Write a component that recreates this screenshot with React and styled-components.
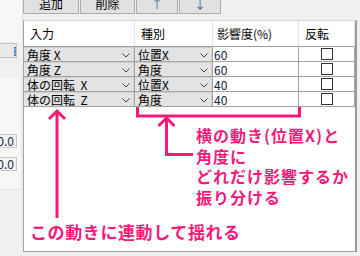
import React from "react";
import styled, { createGlobalStyle } from "styled-components";

const PINK = "#f51a7a";

const GlobalStyle = createGlobalStyle`
  html, body {
    margin: 0;
    padding: 0;
    background: #f0f0f0;
    overflow: hidden;
  }
  body {
    font-family: "Noto Sans CJK JP", "Noto Sans", sans-serif;
  }
`;

const rows = [
  { input: "角度 X", kind: "位置X", value: "60" },
  { input: "角度 Z", kind: "角度", value: "60" },
  { input: "体の回転  X", kind: "位置X", value: "40" },
  { input: "体の回転  Z", kind: "角度", value: "40" },
];

export default function App() {
  return (
    <>
      <GlobalStyle />
      <Page>
        <LeftStrip>
          <TopPane />
          <SmallButton>
            <span>E</span>
          </SmallButton>
          <FieldPane>
            <NumField>10.0</NumField>
            <NumField>10.0</NumField>
          </FieldPane>
        </LeftStrip>

        <Main>
          <ButtonBar>
            <ToolButton $w={56}>追加</ToolButton>
            <ToolButton $w={55}>削除</ToolButton>
            <ToolButton $w={42} $arrow>↑</ToolButton>
            <ToolButton $w={42} $arrow>↓</ToolButton>
          </ButtonBar>

          <ListPanel>
            <Grid>
              <HeadCell>入力</HeadCell>
              <HeadCell>種別</HeadCell>
              <HeadCell $pad={4}>影響度(%)</HeadCell>
              <HeadCell>反転</HeadCell>
              {rows.map((r, i) => (
                <React.Fragment key={i}>
                  <ComboCell>
                    <span>{r.input}</span>
                    <Chevron />
                  </ComboCell>
                  <ComboCell>
                    <span>{r.kind}</span>
                    <Chevron />
                  </ComboCell>
                  <ValueCell>{r.value}</ValueCell>
                  <CheckCell>
                    <CheckBox />
                  </CheckCell>
                </React.Fragment>
              ))}
            </Grid>
          </ListPanel>
        </Main>

        <Annotations viewBox="0 0 360 256" width="360" height="256">
          <g stroke={PINK} strokeWidth="3" fill="none">
            <path d="M137.5 107 V116 H299.5 V107" />
            <path d="M166.5 118 V154.5 H193" />
            <path d="M158.5 126 L166.5 118 L174.5 126" />
            <path d="M57 111 V218" />
            <path d="M49 119 L57 111 L65 119" />
          </g>
        </Annotations>

        <Callout $left={196} $top={125} $size={16}>
          横の動き(位置X)と
          <br />
          角度に
          <br />
          どれだけ影響するか
          <br />
          振り分ける
        </Callout>
        <Callout $left={30} $top={222} $size={17} $spacing={0.6}>
          この動きに連動して揺れる
        </Callout>
      </Page>
    </>
  );
}

function Chevron() {
  return (
    <ChevronIcon width="8" height="5" viewBox="0 0 8 5">
      <path d="M0.5 0.5 L4 4 L7.5 0.5" stroke="#444" strokeWidth="1" fill="none" />
    </ChevronIcon>
  );
}

const Page = styled.div`
  position: relative;
  width: 360px;
  height: 256px;
  display: flex;
  overflow: hidden;
  background: #f0f0f0;
`;

const LeftStrip = styled.div`
  width: 23px;
  flex-shrink: 0;
  display: flex;
  flex-direction: column;
`;

const TopPane = styled.div`
  height: 42px;
  background: #f7f7f7;
  border-right: 1px solid #e2e2e2;
  box-sizing: border-box;
`;

const SmallButton = styled.div`
  width: 17px;
  height: 15px;
  margin-top: 1px;
  box-sizing: border-box;
  border: 1px solid #c4c4c4;
  border-left: none;
  background: #e9e9e9;
  overflow: hidden;
  display: flex;
  justify-content: flex-end;
  align-items: center;
  span {
    font-size: 12px;
    color: #2a63b8;
    margin-right: -4px;
  }
`;

const FieldPane = styled.div`
  margin-top: 20px;
  height: 112px;
  width: 22px;
  background: #f7f7f7;
  border-right: 1px solid #e6e6e6;
  border-bottom: 1px solid #e6e6e6;
  box-sizing: border-box;
  display: flex;
  flex-direction: column;
  gap: 9px;
  padding-top: 56px;
`;

const NumField = styled.div`
  width: 17px;
  height: 14px;
  box-sizing: border-box;
  border: 1px solid #c8c8c8;
  border-left: none;
  background: #f2f2f2;
  font-size: 12px;
  line-height: 12px;
  color: #1b2a48;
  display: flex;
  justify-content: flex-end;
  padding-right: 2px;
  overflow: hidden;
  white-space: nowrap;
`;

const Main = styled.div`
  display: flex;
  flex-direction: column;
`;

const ButtonBar = styled.div`
  display: flex;
  gap: 1px;
  margin-top: -8px;
`;

const ToolButton = styled.div`
  width: ${(p) => p.$w}px;
  height: 22px;
  box-sizing: border-box;
  border: 1px solid #adadad;
  background: #e1e1e1;
  display: flex;
  align-items: center;
  justify-content: center;
  font-size: 12px;
  color: ${(p) => (p.$arrow ? "#2d5fa6" : "#000")};
`;

const ListPanel = styled.div`
  margin-top: 6px;
  width: 334px;
  height: 232px;
  box-sizing: border-box;
  background: #fff;
  border: 1px solid #a3a3a3;
  border-top-color: #d4d4d4;
  border-right: 2px solid #9a9a9a;
`;

const Grid = styled.div`
  display: grid;
  grid-template-columns: 111px 78px 86px 56px;
  grid-auto-rows: 15px;
  grid-template-rows: 26px;
  font-size: 12px;
  color: #000;
`;

const HeadCell = styled.div`
  box-sizing: border-box;
  height: 26px;
  padding-left: ${(p) => p.$pad ?? 6}px;
  display: flex;
  align-items: center;
  border-right: 1px solid #e5e5e5;
  border-bottom: 1px solid #a0a0a0;
  white-space: nowrap;
`;

const BodyCell = styled.div`
  box-sizing: border-box;
  height: 15px;
  border-bottom: 1px solid #a3a3a3;
  border-right: 1px solid #a3a3a3;
  display: flex;
  align-items: center;
  white-space: pre;
  line-height: 13px;
`;

const ComboCell = styled(BodyCell)`
  position: relative;
  background: #e3e3e3;
  box-shadow: inset 0 1px 0 #cfcfcf, inset -1px 0 0 #d2d2d2;
  padding-left: 3px;
  justify-content: space-between;
  padding-right: 4px;
`;

const ChevronIcon = styled.svg`
  align-self: flex-end;
  margin-bottom: 3px;
`;

const ValueCell = styled(BodyCell)`
  padding-left: 1px;
  color: #10203a;
`;

const CheckCell = styled(BodyCell)`
  justify-content: center;
  padding-left: 0;
`;

const CheckBox = styled.div`
  width: 12px;
  height: 12px;
  box-sizing: border-box;
  border: 1px solid #333;
  background: #fff;
  margin-left: 1px;
`;

const Annotations = styled.svg`
  position: absolute;
  left: 0;
  top: 0;
  pointer-events: none;
`;

const Callout = styled.div`
  position: absolute;
  left: ${(p) => p.$left}px;
  top: ${(p) => p.$top}px;
  font-size: ${(p) => p.$size}px;
  letter-spacing: ${(p) => p.$spacing ?? 1}px;
  line-height: 20.5px;
  font-weight: 700;
  color: ${PINK};
  white-space: nowrap;
`;
